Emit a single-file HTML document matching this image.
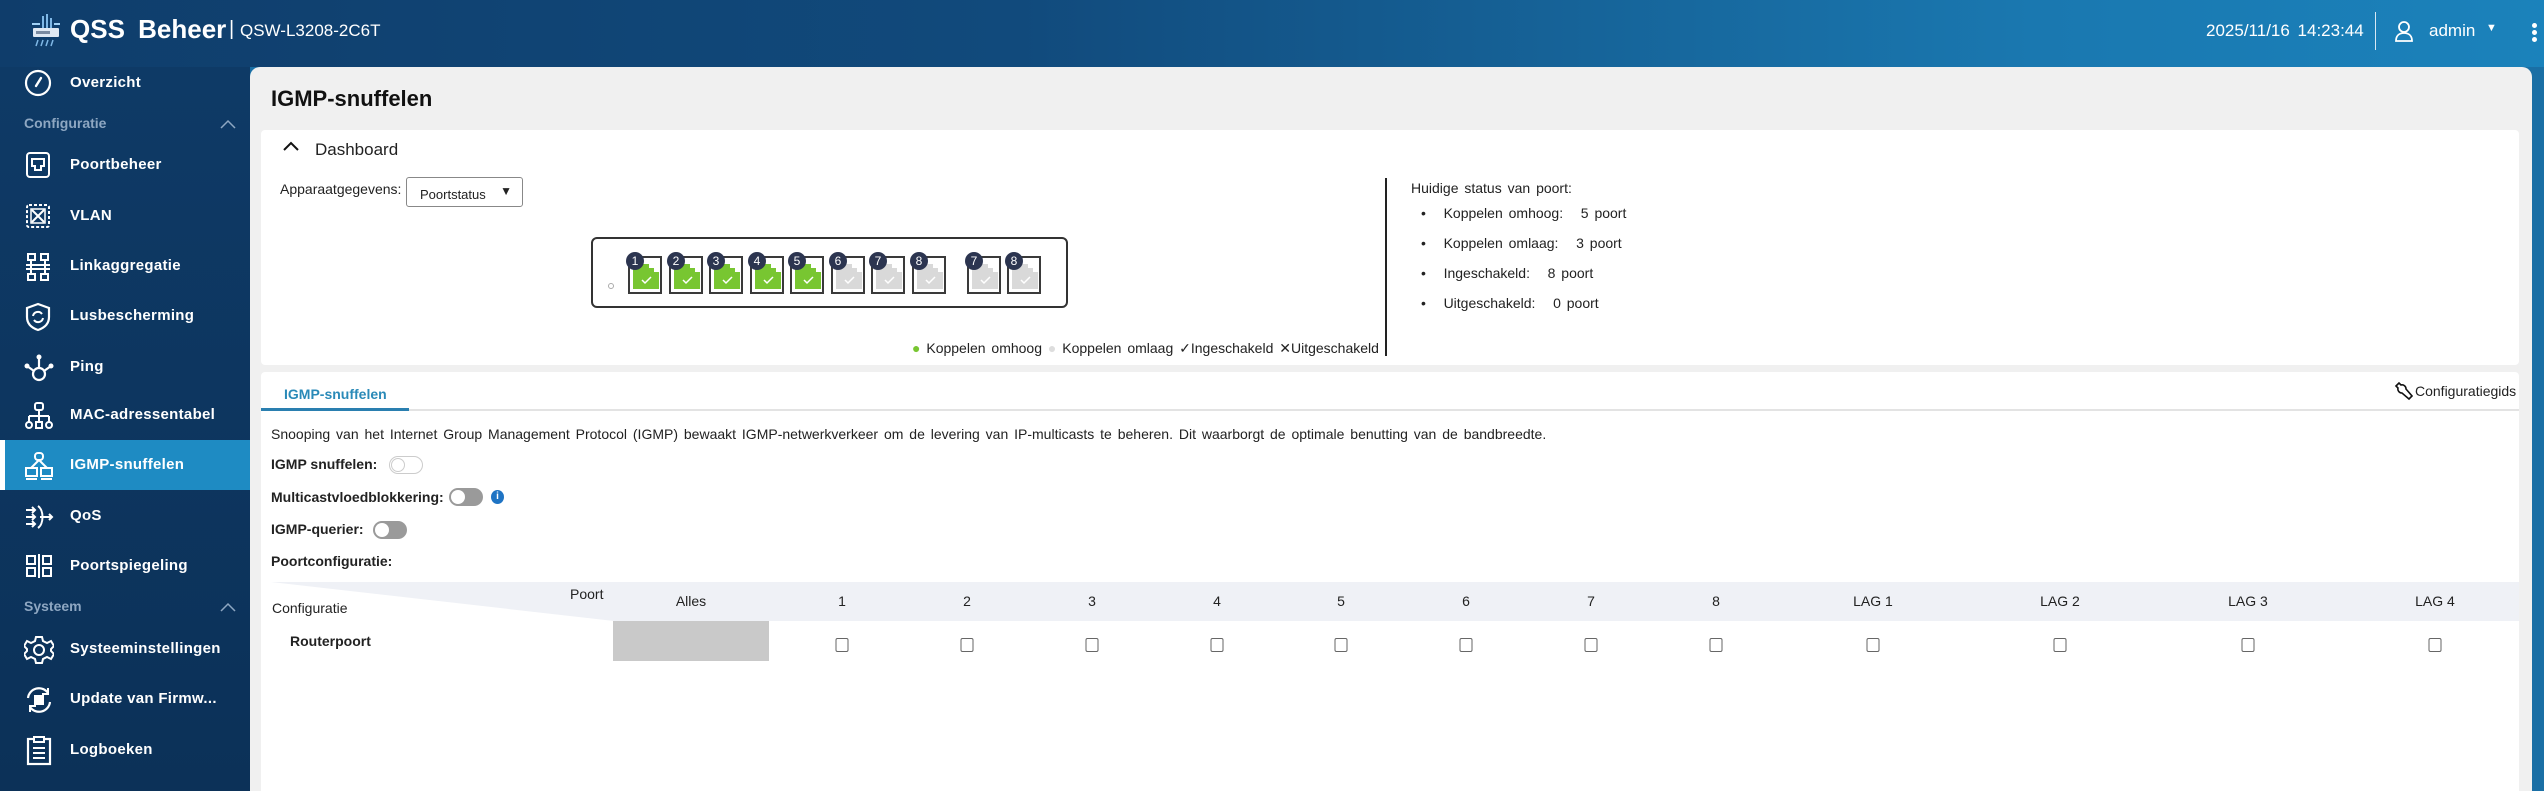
<!DOCTYPE html>
<html><head><meta charset="utf-8"><style>
*{margin:0;padding:0;box-sizing:border-box}
body{width:2544px;height:791px;overflow:hidden;font-family:"Liberation Sans",Arial,sans-serif;background:#1a6fa5;position:relative}
.a{position:absolute;white-space:nowrap}
#hdr{left:0;top:0;width:2544px;height:67px;background:linear-gradient(90deg,#0f3d6b 0%,#114a7c 40%,#1a78b0 80%,#1b82bb 100%)}
#side{left:0;top:67px;width:250px;height:724px;background:linear-gradient(180deg,#0e3a66,#0c3158)}
.si{position:absolute;left:0;width:250px;height:50px;color:#fff;font-weight:bold;font-size:15px;line-height:50px;padding-left:70px;letter-spacing:.3px}
.si svg{position:absolute;left:24px;top:11px}
.sec{position:absolute;left:24px;color:#8ea7c2;font-size:14px;font-weight:bold}
#main{left:250px;top:67px;width:2282px;height:724px;background:#f0f0f0;border-radius:10px 10px 0 0}
.card{position:absolute;background:#fff;border-radius:4px}
.t14{font-size:14px;color:#222}
.port{position:absolute;top:256px;width:34px;height:38px;border:2px solid #3a3a3a;background:#fff}
.port .f{position:absolute;left:3px;top:3px;width:26px;height:28px}
.badge{position:absolute;left:-4px;top:-6px;width:18px;height:18px;border-radius:50%;background:#2c3550;color:#fff;font-size:12px;text-align:center;line-height:18px}
.tog{position:absolute;width:34px;height:18px;border-radius:9px;background:#9a9a9a}
.tog i{position:absolute;left:2px;top:2px;width:14px;height:14px;border-radius:50%;background:#fff}
.col{position:absolute;font-size:14px;color:#222;transform:translateX(-50%)}
.cb{position:absolute;width:13px;height:14px;border:1px solid #666;border-radius:2px;background:#fff;top:638px;transform:translateX(-50%)}
</style></head><body>
<div id="hdr" class="a"></div>
<svg class="a" style="left:30px;top:14px" width="32" height="34" viewBox="0 0 32 34"><rect x="12" y="2" width="2" height="12" fill="#7fb8e6"/><rect x="16" y="0" width="2" height="14" fill="#7fb8e6"/><rect x="20" y="4" width="2" height="10" fill="#7fb8e6"/><path d="M2 10h8M24 10h6" stroke="#9fd0f5" stroke-width="2"/><rect x="3" y="14" width="26" height="9" rx="1" fill="#dfe8f2"/><rect x="6" y="17" width="14" height="3" fill="#7a8aa0"/><path d="M8 26l-2 6M13 26l-2 6M18 26l-2 6M23 26l-2 6" stroke="#7fb8e6" stroke-width="1.5"/></svg>
<div class="a" style="left:70px;top:14px;color:#fff;font-weight:bold;font-size:26px;word-spacing:6px">QSS Beheer</div>
<div class="a" style="left:229px;top:18px;color:#fff;font-size:20px">|</div>
<div class="a" style="left:240px;top:21px;color:#fff;font-size:17px">QSW-L3208-2C6T</div>
<div class="a" style="left:2206px;top:21px;color:#fff;font-size:17px;word-spacing:3px">2025/11/16 14:23:44</div>
<div class="a" style="left:2375px;top:12px;width:1px;height:38px;background:#d8e8f4"></div>
<svg class="a" style="left:2394px;top:20px" width="20" height="22" viewBox="0 0 20 22"><circle cx="10" cy="7" r="5" fill="none" stroke="#fff" stroke-width="1.8"/><path d="M2 21c0-5 3-8 8-8s8 3 8 8z" fill="none" stroke="#fff" stroke-width="1.8"/></svg>
<div class="a" style="left:2429px;top:21px;color:#fff;font-size:17px">admin</div>
<div class="a" style="left:2486px;top:22px;color:#fff;font-size:11px">▼</div>
<div class="a" style="left:2532px;top:23px;width:5px;height:5px;border-radius:50%;background:#fff;box-shadow:0 7px 0 #fff,0 14px 0 #fff"></div>

<div id="side" class="a">
<div class="si" style="top:-9px"><svg width="28" height="28" viewBox="0 0 28 28"><circle cx="14" cy="14" r="12" fill="none" stroke="#fff" stroke-width="2.2"/><path d="M12 17l5-8" stroke="#fff" stroke-width="2.4" stroke-linecap="round"/></svg>Overzicht</div>
<div class="sec" style="top:48px">Configuratie</div>
<svg class="a" style="left:220px;top:52px" width="16" height="10"><path d="M1 9l7-7 7 7" fill="none" stroke="#8ea7c2" stroke-width="1.5"/></svg>
<div class="si" style="top:73px"><svg width="28" height="28" viewBox="0 0 28 28"><rect x="3" y="2" width="22" height="24" rx="3" fill="none" stroke="#fff" stroke-width="2"/><path d="M8 8h12v7h-3v4h-6v-4H8z" fill="none" stroke="#fff" stroke-width="2"/></svg>Poortbeheer</div>
<div class="si" style="top:124px"><svg width="28" height="28" viewBox="0 0 28 28"><rect x="3" y="3" width="22" height="22" rx="2" fill="none" stroke="#fff" stroke-width="2" stroke-dasharray="3 2"/><path d="M8 8l12 12M20 8L8 20" stroke="#fff" stroke-width="2"/><rect x="7" y="7" width="14" height="14" fill="none" stroke="#fff" stroke-width="1.5"/></svg>VLAN</div>
<div class="si" style="top:174px"><svg width="28" height="30" viewBox="0 0 28 30"><rect x="4" y="2" width="7" height="6" fill="none" stroke="#fff" stroke-width="2"/><rect x="17" y="2" width="7" height="6" fill="none" stroke="#fff" stroke-width="2"/><rect x="4" y="22" width="7" height="6" fill="none" stroke="#fff" stroke-width="2"/><rect x="17" y="22" width="7" height="6" fill="none" stroke="#fff" stroke-width="2"/><path d="M7 8v14M21 8v14M2 13h24M2 17h24" stroke="#fff" stroke-width="2"/></svg>Linkaggregatie</div>
<div class="si" style="top:224px"><svg width="28" height="30" viewBox="0 0 28 30"><path d="M14 2l11 4v9c0 7-5 11-11 13C8 26 3 22 3 15V6z" fill="none" stroke="#fff" stroke-width="2.2"/><path d="M9 14a5 5 0 0 1 9-2M19 16a5 5 0 0 1-9 2" fill="none" stroke="#fff" stroke-width="2"/></svg>Lusbescherming</div>
<div class="si" style="top:275px"><svg width="30" height="30" viewBox="0 0 30 30"><circle cx="15" cy="21" r="6" fill="none" stroke="#fff" stroke-width="2.2"/><path d="M15 15V4M10 18L3 13M20 18l7-5" stroke="#fff" stroke-width="2.2"/><circle cx="15" cy="4" r="2.5" fill="#fff"/><circle cx="3" cy="13" r="2.5" fill="#fff"/><circle cx="27" cy="13" r="2.5" fill="#fff"/></svg>Ping</div>
<div class="si" style="top:323px"><svg width="30" height="30" viewBox="0 0 30 30"><rect x="11" y="2" width="8" height="7" rx="2" fill="none" stroke="#fff" stroke-width="2"/><path d="M15 9v6M5 15h20M5 15v6M15 15v6M25 15v6" stroke="#fff" stroke-width="2"/><circle cx="5" cy="24" r="3" fill="none" stroke="#fff" stroke-width="2"/><rect x="12" y="21" width="6" height="6" fill="none" stroke="#fff" stroke-width="2"/><circle cx="25" cy="24" r="3" fill="none" stroke="#fff" stroke-width="2"/></svg>MAC-adressentabel</div>
<div class="si" style="top:373px;background:#1e8bc3;border-left:5px solid #fff;padding-left:65px"><svg style="left:19px" width="30" height="30" viewBox="0 0 30 30"><rect x="11" y="2" width="8" height="7" rx="3" fill="none" stroke="#fff" stroke-width="2"/><path d="M15 9l-8 8M15 9l8 8" stroke="#fff" stroke-width="2"/><rect x="2" y="17" width="11" height="8" fill="none" stroke="#fff" stroke-width="2"/><rect x="17" y="17" width="11" height="8" fill="none" stroke="#fff" stroke-width="2"/><path d="M2 28h11M17 28h11" stroke="#fff" stroke-width="2"/></svg>IGMP-snuffelen</div>
<div class="si" style="top:424px"><svg width="30" height="30" viewBox="0 0 30 30"><path d="M2 8h9M2 15h9M2 22h9M8 5l3 3-3 3M8 12l3 3-3 3M8 19l3 3-3 3M14 4c6 4 6 18 0 22M16 15h12M25 12l3 3-3 3" fill="none" stroke="#fff" stroke-width="2"/></svg>QoS</div>
<div class="si" style="top:474px"><svg width="30" height="30" viewBox="0 0 30 30"><rect x="3" y="4" width="8" height="8" fill="none" stroke="#fff" stroke-width="2"/><rect x="3" y="16" width="8" height="8" fill="none" stroke="#fff" stroke-width="2"/><rect x="19" y="4" width="8" height="8" fill="none" stroke="#fff" stroke-width="2"/><rect x="19" y="16" width="8" height="8" fill="none" stroke="#fff" stroke-width="2"/><path d="M15 2v24" stroke="#fff" stroke-width="2"/></svg>Poortspiegeling</div>
<div class="sec" style="top:531px">Systeem</div>
<svg class="a" style="left:220px;top:535px" width="16" height="10"><path d="M1 9l7-7 7 7" fill="none" stroke="#8ea7c2" stroke-width="1.5"/></svg>
<div class="si" style="top:557px"><svg width="30" height="30" viewBox="0 0 30 30"><path d="M12 2h6l1 4 4 2 4-2 3 5-3 3v2l3 3-3 5-4-2-4 2-1 4h-6l-1-4-4-2-4 2-3-5 3-3v-2L0 11l3-5 4 2 4-2z" fill="none" stroke="#fff" stroke-width="2"/><circle cx="15" cy="15" r="5" fill="none" stroke="#fff" stroke-width="2"/></svg>Systeeminstellingen</div>
<div class="si" style="top:607px"><svg width="30" height="30" viewBox="0 0 30 30"><path d="M4 13a11 11 0 0 1 20-5M26 17a11 11 0 0 1-20 5" fill="none" stroke="#fff" stroke-width="2.2"/><path d="M24 3v6h-6M6 27v-6h6" fill="none" stroke="#fff" stroke-width="2"/><rect x="10" y="10" width="10" height="10" fill="#fff"/></svg>Update van Firmw...</div>
<div class="si" style="top:658px"><svg width="30" height="30" viewBox="0 0 30 30"><rect x="4" y="3" width="22" height="25" fill="none" stroke="#fff" stroke-width="2.2"/><rect x="10" y="1" width="10" height="5" fill="#0d355f" stroke="#fff" stroke-width="2"/><path d="M9 12h12M9 17h12M9 22h12" stroke="#fff" stroke-width="2"/></svg>Logboeken</div>
</div>

<div id="main" class="a"></div>
<div class="a" style="left:271px;top:86px;font-size:22px;font-weight:bold;color:#111">IGMP-snuffelen</div>
<div class="card" style="left:261px;top:130px;width:2258px;height:235px"></div>
<svg class="a" style="left:283px;top:140px" width="16" height="12"><path d="M1 10l7-7 7 7" fill="none" stroke="#111" stroke-width="2"/></svg>
<div class="a" style="left:315px;top:140px;font-size:17px;color:#222">Dashboard</div>
<div class="a t14" style="left:280px;top:181px">Apparaatgegevens:</div>
<div class="a" style="left:406px;top:177px;width:117px;height:30px;border:1px solid #888;border-radius:3px;font-size:13px;padding:9px 0 0 13px;color:#222">Poortstatus<span style="position:absolute;right:10px;top:6px;font-size:12px">▼</span></div>
<div class="a" style="left:591px;top:237px;width:477px;height:71px;border:2px solid #333;border-radius:6px"></div>
<div class="a" style="left:608px;top:283px;width:6px;height:6px;border-radius:50%;border:1px solid #aaa"></div>

<div class="port" style="left:628px"><svg class="f" viewBox="0 0 26 28"><path d="M0 0h10v3h6v4h5v4h5v17H0z" fill="#78c631"/><path d="M9 19l3 3 6-6" fill="none" stroke="#fff" stroke-width="1.5"/></svg><div class="badge">1</div></div>
<div class="port" style="left:669px"><svg class="f" viewBox="0 0 26 28"><path d="M0 0h10v3h6v4h5v4h5v17H0z" fill="#78c631"/><path d="M9 19l3 3 6-6" fill="none" stroke="#fff" stroke-width="1.5"/></svg><div class="badge">2</div></div>
<div class="port" style="left:709px"><svg class="f" viewBox="0 0 26 28"><path d="M0 0h10v3h6v4h5v4h5v17H0z" fill="#78c631"/><path d="M9 19l3 3 6-6" fill="none" stroke="#fff" stroke-width="1.5"/></svg><div class="badge">3</div></div>
<div class="port" style="left:750px"><svg class="f" viewBox="0 0 26 28"><path d="M0 0h10v3h6v4h5v4h5v17H0z" fill="#78c631"/><path d="M9 19l3 3 6-6" fill="none" stroke="#fff" stroke-width="1.5"/></svg><div class="badge">4</div></div>
<div class="port" style="left:790px"><svg class="f" viewBox="0 0 26 28"><path d="M0 0h10v3h6v4h5v4h5v17H0z" fill="#78c631"/><path d="M9 19l3 3 6-6" fill="none" stroke="#fff" stroke-width="1.5"/></svg><div class="badge">5</div></div>
<div class="port" style="left:831px"><svg class="f" viewBox="0 0 26 28"><path d="M0 0h10v3h6v4h5v4h5v17H0z" fill="#d9d9d9"/><path d="M9 19l3 3 6-6" fill="none" stroke="#fff" stroke-width="1.5"/></svg><div class="badge">6</div></div>
<div class="port" style="left:871px"><svg class="f" viewBox="0 0 26 28"><path d="M0 0h10v3h6v4h5v4h5v17H0z" fill="#d9d9d9"/><path d="M9 19l3 3 6-6" fill="none" stroke="#fff" stroke-width="1.5"/></svg><div class="badge">7</div></div>
<div class="port" style="left:912px"><svg class="f" viewBox="0 0 26 28"><path d="M0 0h10v3h6v4h5v4h5v17H0z" fill="#d9d9d9"/><path d="M9 19l3 3 6-6" fill="none" stroke="#fff" stroke-width="1.5"/></svg><div class="badge">8</div></div>
<div class="port" style="left:967px"><svg class="f" viewBox="0 0 26 28"><path d="M0 0h10v3h6v4h5v4h5v17H0z" fill="#d9d9d9"/><path d="M9 19l3 3 6-6" fill="none" stroke="#fff" stroke-width="1.5"/></svg><div class="badge">7</div></div>
<div class="port" style="left:1007px"><svg class="f" viewBox="0 0 26 28"><path d="M0 0h10v3h6v4h5v4h5v17H0z" fill="#d9d9d9"/><path d="M9 19l3 3 6-6" fill="none" stroke="#fff" stroke-width="1.5"/></svg><div class="badge">8</div></div>

<div class="a t14" style="left:912px;top:340px;word-spacing:2px"><span style="color:#78c631">●</span> Koppelen omhoog <span style="color:#ddd">●</span> Koppelen omlaag ✓Ingeschakeld ✕Uitgeschakeld</div>
<div class="a" style="left:1385px;top:178px;width:2px;height:178px;background:#222"></div>
<div class="a t14" style="left:1411px;top:180px;word-spacing:2px">Huidige status van poort:</div>
<div class="a t14" style="left:1421px;top:198px;line-height:30px;word-spacing:2px">•&nbsp;&nbsp;&nbsp;Koppelen omhoog:&nbsp;&nbsp;&nbsp;5 poort<br>•&nbsp;&nbsp;&nbsp;Koppelen omlaag:&nbsp;&nbsp;&nbsp;3 poort<br>•&nbsp;&nbsp;&nbsp;Ingeschakeld:&nbsp;&nbsp;&nbsp;8 poort<br>•&nbsp;&nbsp;&nbsp;Uitgeschakeld:&nbsp;&nbsp;&nbsp;0 poort</div>

<div class="card" style="left:261px;top:372px;width:2258px;height:419px;border-radius:4px 4px 0 0"></div>
<div class="a" style="left:284px;top:386px;font-size:14px;font-weight:bold;color:#2a8ab8">IGMP-snuffelen</div>
<div class="a" style="left:261px;top:409px;width:2258px;height:2px;background:#e3e3e3"></div>
<div class="a" style="left:261px;top:408px;width:148px;height:3px;background:#2a7fb0"></div>
<svg class="a" style="left:2393px;top:381px" width="20" height="20" viewBox="0 0 20 20"><path d="M3 5l3-3 2 2a4 4 0 0 1 5 4l6 7-3 3-7-6a4 4 0 0 1-4-5z" fill="none" stroke="#111" stroke-width="1.6"/></svg>
<div class="a t14" style="left:2415px;top:383px">Configuratiegids</div>
<div class="a" style="left:271px;top:426px;font-size:14px;color:#222;word-spacing:2px">Snooping van het Internet Group Management Protocol (IGMP) bewaakt IGMP-netwerkverkeer om de levering van IP-multicasts te beheren. Dit waarborgt de optimale benutting van de bandbreedte.</div>
<div class="a" style="left:271px;top:456px;font-size:14px;font-weight:bold;color:#222">IGMP snuffelen:</div>
<div class="tog" style="left:389px;top:456px;background:#fff;border:1px solid #ccc"><i style="border:1px solid #ccc;left:1px;top:1px"></i></div>
<div class="a" style="left:271px;top:489px;font-size:14px;font-weight:bold;color:#222">Multicastvloedblokkering:</div>
<div class="tog" style="left:449px;top:488px"><i></i></div>
<div class="a" style="left:491px;top:490px;width:13px;height:14px;border-radius:50%;background:#1f74c4;color:#fff;font-size:10px;font-weight:bold;text-align:center;line-height:14px">i</div>
<div class="a" style="left:271px;top:521px;font-size:14px;font-weight:bold;color:#222">IGMP-querier:</div>
<div class="tog" style="left:373px;top:521px"><i></i></div>
<div class="a" style="left:271px;top:553px;font-size:14px;font-weight:bold;color:#222">Poortconfiguratie:</div>

<div class="a" style="left:271px;top:582px;width:2248px;height:39px;background:#eff1f6"></div>
<svg class="a" style="left:271px;top:582px" width="345" height="40"><path d="M0 0L343 39L0 39z" fill="#fff"/></svg>
<div class="a t14" style="left:570px;top:586px">Poort</div>
<div class="a t14" style="left:272px;top:600px">Configuratie</div>
<div class="col" style="left:691px;top:593px">Alles</div>
<div class="col" style="left:842px;top:593px">1</div>
<div class="col" style="left:967px;top:593px">2</div>
<div class="col" style="left:1092px;top:593px">3</div>
<div class="col" style="left:1217px;top:593px">4</div>
<div class="col" style="left:1341px;top:593px">5</div>
<div class="col" style="left:1466px;top:593px">6</div>
<div class="col" style="left:1591px;top:593px">7</div>
<div class="col" style="left:1716px;top:593px">8</div>
<div class="col" style="left:1873px;top:593px">LAG 1</div>
<div class="col" style="left:2060px;top:593px">LAG 2</div>
<div class="col" style="left:2248px;top:593px">LAG 3</div>
<div class="col" style="left:2435px;top:593px">LAG 4</div>
<div class="a" style="left:290px;top:633px;font-size:14px;font-weight:bold;color:#222">Routerpoort</div>
<div class="a" style="left:613px;top:621px;width:156px;height:40px;background:#c9c9c9"></div>
<div class="cb" style="left:842px"></div><div class="cb" style="left:967px"></div><div class="cb" style="left:1092px"></div><div class="cb" style="left:1217px"></div><div class="cb" style="left:1341px"></div><div class="cb" style="left:1466px"></div><div class="cb" style="left:1591px"></div><div class="cb" style="left:1716px"></div><div class="cb" style="left:1873px"></div><div class="cb" style="left:2060px"></div><div class="cb" style="left:2248px"></div><div class="cb" style="left:2435px"></div>
</body></html>
